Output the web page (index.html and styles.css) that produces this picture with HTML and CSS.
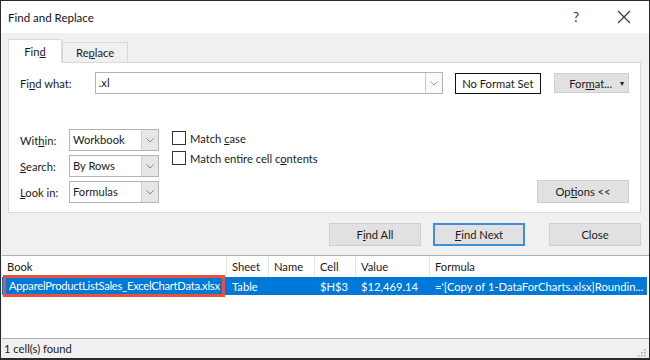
FILE: index.html
```html
<!DOCTYPE html>
<html>
<head>
    <title>Find and Replace</title>
    <link rel="stylesheet" href="styles.css">
</head>
<body>
    <div class="window">
        <div class="titlebar">
            <span class="title">Find and Replace</span>
            <span class="help">?</span>
            <svg class="close-x" width="14" height="14" viewBox="0 0 14 14">
                <path d="M1 1 L13 13 M13 1 L1 13" stroke="#333" stroke-width="1.1" fill="none"/>
            </svg>
        </div>

        <div class="content">
            <div class="tabs">
                <div class="tab active">Fin<u>d</u></div>
                <div class="tab">Re<u>p</u>lace</div>
            </div>

            <div class="panel">
                <div class="find-row">
                    <span class="label">Fi<u>n</u>d what:</span>
                    <div class="combo wide">
                        <span class="combo-text">.xl</span>
                        <span class="arrow plain"><svg width="8" height="5" viewBox="0 0 8 5"><path d="M0.5 0.5 L4 4 L7.5 0.5" stroke="#999" fill="none"/></svg></span>
                    </div>
                    <div class="format-box">No Format Set</div>
                    <div class="btn format-btn"><span>For<u>m</u>at...</span><span class="caret">▾</span></div>
                </div>

                <div class="options">
                    <div class="selects">
                        <div class="opt-row">
                            <span class="label short">Wit<u>h</u>in:</span>
                            <div class="combo small">
                                <span class="combo-text">Workbook</span>
                                <span class="arrow"><svg width="8" height="5" viewBox="0 0 8 5"><path d="M0.5 0.5 L4 4 L7.5 0.5" stroke="#888" fill="none"/></svg></span>
                            </div>
                        </div>
                        <div class="opt-row">
                            <span class="label short"><u>S</u>earch:</span>
                            <div class="combo small">
                                <span class="combo-text">By Rows</span>
                                <span class="arrow"><svg width="8" height="5" viewBox="0 0 8 5"><path d="M0.5 0.5 L4 4 L7.5 0.5" stroke="#888" fill="none"/></svg></span>
                            </div>
                        </div>
                        <div class="opt-row">
                            <span class="label short"><u>L</u>ook in:</span>
                            <div class="combo small">
                                <span class="combo-text">Formulas</span>
                                <span class="arrow"><svg width="8" height="5" viewBox="0 0 8 5"><path d="M0.5 0.5 L4 4 L7.5 0.5" stroke="#888" fill="none"/></svg></span>
                            </div>
                        </div>
                    </div>

                    <div class="checks">
                        <label class="check"><span class="box"></span><span>Match <u>c</u>ase</span></label>
                        <label class="check"><span class="box"></span><span>Match entire cell c<u>o</u>ntents</span></label>
                    </div>

                    <div class="btn options-btn">Op<u>t</u>ions &lt;&lt;</div>
                </div>
            </div>

            <div class="actions">
                <div class="btn action">F<u>i</u>nd All</div>
                <div class="btn action primary"><u>F</u>ind Next</div>
                <div class="btn action close">Close</div>
            </div>
        </div>

        <div class="results">
            <div class="row head">
                <div class="c book">Book</div>
                <div class="c sheet">Sheet</div>
                <div class="c name">Name</div>
                <div class="c cell">Cell</div>
                <div class="c value">Value</div>
                <div class="c formula">Formula</div>
            </div>
            <div class="row selected">
                <div class="c book"><span class="marked">ApparelProductListSales_ExcelChartData.xlsx</span></div>
                <div class="c sheet">Table</div>
                <div class="c name"></div>
                <div class="c cell">$H$3</div>
                <div class="c value">$12,469.14</div>
                <div class="c formula">='[Copy of 1-DataForCharts.xlsx]Roundin...</div>
            </div>
        </div>

        <div class="statusbar">
            <span>1 cell(s) found</span>
            <svg class="grip" width="10" height="10" viewBox="0 0 10 10">
                <rect x="8" y="2" width="1.5" height="1.5" fill="#aaa"/>
                <rect x="5" y="5" width="1.5" height="1.5" fill="#aaa"/>
                <rect x="8" y="5" width="1.5" height="1.5" fill="#aaa"/>
                <rect x="2" y="8" width="1.5" height="1.5" fill="#aaa"/>
                <rect x="5" y="8" width="1.5" height="1.5" fill="#aaa"/>
                <rect x="8" y="8" width="1.5" height="1.5" fill="#aaa"/>
            </svg>
        </div>
    </div>
</body>
</html>
```

FILE: styles.css
```css
* { box-sizing: border-box; }

body {
    margin: 0;
    font-family: Lato, "Noto Sans", sans-serif;
    font-size: 11.2px;
    color: #1a1a1a;
    background: #fff;
}
u { text-decoration: underline; text-underline-offset: 1px; }

.window {
    width: 650px;
    height: 360px;
    border: 1px solid #2b2b2b;
    border-bottom-width: 2px;
    background: #f0f0f0;
    display: flex;
    flex-direction: column;
}

.titlebar {
    height: 32px;
    background: #fff;
    display: flex;
    align-items: center;
    padding: 0 18px 0 7px;
}
.title { font-size: 11.5px; flex: 1; color: #111; }
.help { font-size: 13px; margin-right: 38px; color: #333; }

.content { padding: 6px 8px 0 7px; }

.tabs { display: flex; align-items: flex-end; height: 23px; }
.tab {
    height: 20px;
    padding: 3px 13px 0;
    border: 1px solid #d9d9d9;
    border-bottom: none;
    background: #f0f0f0;
}
.tab.active {
    height: 24px;
    width: 54px;
    padding-top: 5px;
    text-align: center;
    background: #fff;
    margin-bottom: -1px;
    position: relative;
    z-index: 1;
}

.panel {
    height: 151px;
    background: #fff;
    border: 1px solid #d9d9d9;
    padding: 9px 11px 0 11px;
}

.find-row { display: flex; align-items: center; height: 22px; }
.label { width: 75px; }
.label.short { width: 49px; }

.combo {
    display: flex;
    height: 22px;
    border: 1px solid #b4b4b4;
    background: #fff;
}
.combo.wide { width: 349px; }
.combo.small { width: 90px; }
.combo-text { flex: 1; padding: 3px 3px 0; }
.arrow {
    width: 17px;
    background: #e6e6e6;
    border-left: 1px solid #cfcfcf;
    display: flex;
    align-items: center;
    justify-content: center;
}
.arrow.plain { background: #fafafa; }

.format-box {
    margin-left: 12px;
    width: 87px;
    height: 21px;
    border: 1px solid #111;
    text-align: center;
    padding-top: 3px;
}

.btn {
    background: #e1e1e1;
    border: 1px solid #cfcfcf;
    text-align: center;
    white-space: nowrap;
}
.format-btn {
    margin-left: 13px;
    width: 75px;
    height: 20px;
    display: flex;
    align-items: center;
    justify-content: space-between;
    padding: 0 4px 0 14px;
}
.caret { font-size: 8px; }

.options {
    display: flex;
    align-items: flex-start;
    margin-top: 35px;
}
.selects { display: flex; flex-direction: column; gap: 4px; }
.opt-row { display: flex; align-items: center; }

.checks {
    display: flex;
    flex-direction: column;
    gap: 6px;
    margin-left: 13px;
    padding-top: 2px;
}
.check { display: flex; align-items: center; }
.box {
    width: 14px;
    height: 14px;
    border: 1px solid #333;
    margin-right: 4px;
}

.options-btn {
    margin-left: auto;
    margin-top: 51px;
    width: 92px;
    height: 23px;
    padding-top: 4px;
}

.actions {
    display: flex;
    justify-content: flex-end;
    gap: 12px;
    padding: 10px 0 0;
    height: 42px;
}
.action {
    width: 92px;
    height: 23px;
    padding-top: 4px;
}
.action.primary { border: 2px solid #3b8fdb; padding-top: 3px; }
.action.close { margin-left: 12px; }

.results {
    height: 84px;
    background: #fff;
    border-top: 1px solid #adadad;
    border-bottom: 1px solid #adadad;
    margin: 0 0 0 1px;
}
.row { display: flex; height: 21px; align-items: center; }
.row.head .c { border-right: 1px solid #e5e5e5; height: 100%; padding-top: 4px; }
.row.head .formula { border-right: none; }
.c { padding-left: 5px; white-space: nowrap; overflow: hidden; }
.book { width: 225px; }
.sheet { width: 42px; }
.name { width: 46px; }
.cell { width: 41px; }
.value { width: 74px; }
.formula { flex: 1; }

.row.selected {
    background: #0078d7;
    color: #fff;
    height: 18px;
    margin-right: 2px;
}
.row.selected .c { overflow: visible; }
.row.selected .book { padding-left: 1px; height: 24px; display: flex; align-items: center; }
.marked {
    display: inline-block;
    border: 3px solid #e8503f;
    padding: 1px 2px 2px 3px;
    letter-spacing: -0.25px;
    background: #0078d7;
}

.statusbar {
    flex: 1;
    display: flex;
    align-items: center;
    justify-content: space-between;
    padding: 0 3px 0 3px;
}
.grip { align-self: flex-end; margin-bottom: 1px; }
```
